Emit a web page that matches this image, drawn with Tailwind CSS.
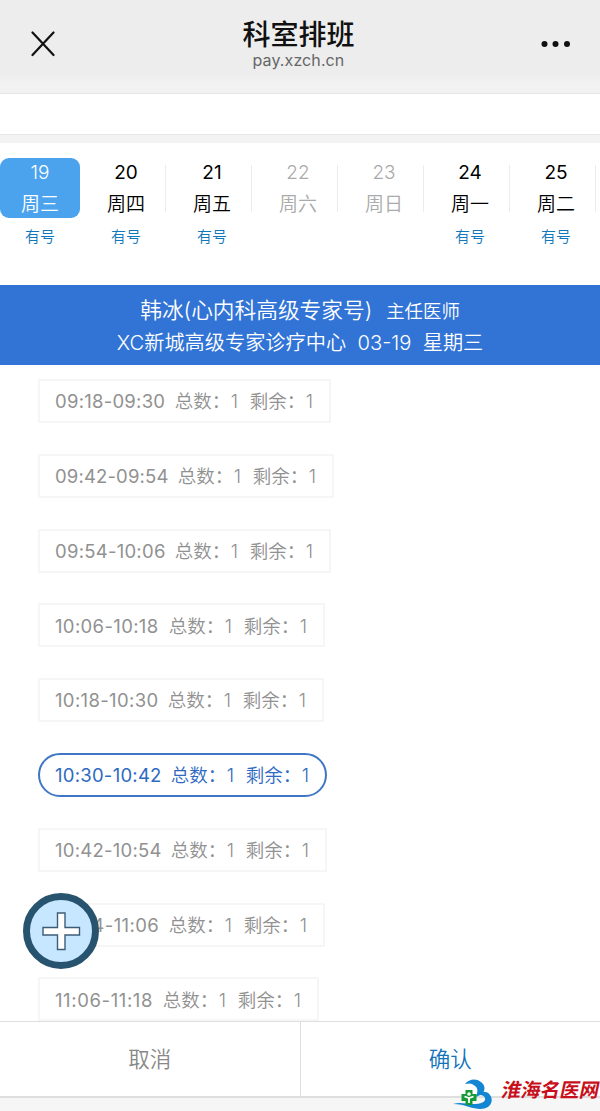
<!DOCTYPE html>
<html lang="zh-CN">

<head>
  <meta charset="UTF-8">
  <meta name="viewport" content="width=device-width, initial-scale=1.0">
  <title>科室排班</title>
  <script src="https://cdn.jsdelivr.net/npm/@tailwindcss/browser@4"></script>
  <style>
    body {
      font-family: 'Inter', 'Noto Sans CJK SC', sans-serif;
    }
  </style>
</head>

<body class="relative flex flex-col h-[1111px] w-[600px] overflow-hidden bg-white">
  <!-- 顶部导航栏 -->
  <header class="h-[94px] shrink-0 bg-gradient-to-b from-[#ededed] from-80% to-[#f2f2f2] to-90% border-b border-[#e6e6e6] flex items-start justify-between">
    <svg class="w-6 h-[26px] mt-[31px] ml-[31px]" viewBox="0 0 24 26" fill="none" stroke="#111" stroke-width="2.2" stroke-linecap="round">
      <path d="M1.5 1.5 L22.5 24 M22.5 1.5 L1.5 24" />
    </svg>
    <div class="text-center mt-[20px] ml-[1px]">
      <h1 class="text-[28px] leading-[30px] font-medium text-[#111]">科室排班</h1>
      <p class="text-[16px] leading-[20px] text-[#666] tracking-[0.1px]">pay.xzch.cn</p>
    </div>
    <svg class="w-[30px] h-[8px] mt-[40px] mr-[29px]" viewBox="0 0 30 8" fill="#111">
      <circle cx="3.5" cy="4" r="3" />
      <circle cx="14.5" cy="4" r="3" />
      <circle cx="26" cy="4" r="3" />
    </svg>
  </header>
  <div class="h-[40px] shrink-0 bg-white"></div>
  <div class="h-[9px] shrink-0 bg-[#f3f3f3] border-t border-[#e8e8e8]"></div>

  <!-- 日期选择 -->
  <nav class="flex h-[142px] shrink-0 pt-[15px] w-[610px] text-[19px] leading-[31px] text-center text-black font-[350]">
    <div class="w-20 mr-[3px] shrink-0">
      <div class="h-[60px] rounded-[9px] bg-[#4ba3ee] text-white">
        <div class="leading-[30px]">19</div>
        <div class="leading-[33px]">周三</div>
      </div>
      <div class="text-[15px] leading-[38px] text-[#1177bb]">有号</div>
    </div>
    <div class="w-[86px] shrink-0">
      <div class="h-[60px] bg-[linear-gradient(#ececec,#ececec)] bg-[length:1px_47px] bg-[position:82px_7px] bg-no-repeat">
        <div class="leading-[30px] font-normal">20</div>
        <div class="leading-[33px]">周四</div>
      </div>
      <div class="text-[15px] leading-[38px] text-[#1177bb]">有号</div>
    </div>
    <div class="w-[86px] shrink-0">
      <div class="h-[60px] bg-[linear-gradient(#ececec,#ececec)] bg-[length:1px_47px] bg-[position:82px_7px] bg-no-repeat">
        <div class="leading-[30px] font-normal">21</div>
        <div class="leading-[33px]">周五</div>
      </div>
      <div class="text-[15px] leading-[38px] text-[#1177bb]">有号</div>
    </div>
    <div class="w-[86px] shrink-0 text-[#aaa]">
      <div class="h-[60px] bg-[linear-gradient(#ececec,#ececec)] bg-[length:1px_47px] bg-[position:82px_7px] bg-no-repeat">
        <div class="leading-[30px]">22</div>
        <div class="leading-[33px]">周六</div>
      </div>
    </div>
    <div class="w-[86px] shrink-0 text-[#aaa]">
      <div class="h-[60px] bg-[linear-gradient(#ececec,#ececec)] bg-[length:1px_47px] bg-[position:82px_7px] bg-no-repeat">
        <div class="leading-[30px]">23</div>
        <div class="leading-[33px]">周日</div>
      </div>
    </div>
    <div class="w-[86px] shrink-0">
      <div class="h-[60px] bg-[linear-gradient(#ececec,#ececec)] bg-[length:1px_47px] bg-[position:82px_7px] bg-no-repeat">
        <div class="leading-[30px] font-normal">24</div>
        <div class="leading-[33px]">周一</div>
      </div>
      <div class="text-[15px] leading-[38px] text-[#1177bb]">有号</div>
    </div>
    <div class="w-[86px] shrink-0">
      <div class="h-[60px] bg-[linear-gradient(#ececec,#ececec)] bg-[length:1px_47px] bg-[position:82px_7px] bg-no-repeat">
        <div class="leading-[30px] font-normal">25</div>
        <div class="leading-[33px]">周二</div>
      </div>
      <div class="text-[15px] leading-[38px] text-[#1177bb]">有号</div>
    </div>
  </nav>

  <!-- 医生信息 -->
  <section class="h-[80px] shrink-0 bg-[#3174d6] text-white text-center pt-[10px] font-[350]">
    <div class="leading-[31px] text-[21.7px]">韩冰(心内科高级专家号)<span class="text-[18.4px] ml-[14px]">主任医师</span></div>
    <div class="leading-[31px] text-[20.2px]">XC新城高级专家诊疗中心&nbsp; 03-19&nbsp; 星期三</div>
  </section>

  <!-- 号源时段 -->
  <main class="h-[656px] shrink-0 overflow-hidden pt-[14px] pl-[38px] flex flex-col gap-[30.8px] text-[18.5px] text-[#919191] font-[350]">
    <div class="w-[293px] h-11 shrink-0 flex items-center justify-between pl-[15px] pr-4 pt-[2px] border-2 border-[#f6f6f6]">
      <span class="tracking-[0.25px] font-normal">09:18-09:30</span>
      <span class="flex"><span class="w-[56px]">总数：</span><span class="w-[19px]">1</span><span class="w-[56px]">剩余：</span><span>1</span></span>
    </div>
    <div class="w-[296px] h-11 shrink-0 flex items-center justify-between pl-[15px] pr-4 pt-[2px] border-2 border-[#f6f6f6]">
      <span class="tracking-[0.15px] font-normal">09:42-09:54</span>
      <span class="flex"><span class="w-[56px]">总数：</span><span class="w-[19px]">1</span><span class="w-[56px]">剩余：</span><span>1</span></span>
    </div>
    <div class="w-[293px] h-11 shrink-0 flex items-center justify-between pl-[15px] pr-4 pt-[2px] border-2 border-[#f6f6f6]">
      <span class="tracking-[0.25px] font-normal">09:54-10:06</span>
      <span class="flex"><span class="w-[56px]">总数：</span><span class="w-[19px]">1</span><span class="w-[56px]">剩余：</span><span>1</span></span>
    </div>
    <div class="w-[287px] h-11 shrink-0 flex items-center justify-between pl-[15px] pr-4 pt-[2px] border-2 border-[#f6f6f6]">
      <span class="tracking-[0.35px] font-normal">10:06-10:18</span>
      <span class="flex"><span class="w-[56px]">总数：</span><span class="w-[19px]">1</span><span class="w-[56px]">剩余：</span><span>1</span></span>
    </div>
    <div class="w-[286px] h-11 shrink-0 flex items-center justify-between pl-[15px] pr-4 pt-[2px] border-2 border-[#f6f6f6]">
      <span class="tracking-[0.35px] font-normal">10:18-10:30</span>
      <span class="flex"><span class="w-[56px]">总数：</span><span class="w-[19px]">1</span><span class="w-[56px]">剩余：</span><span>1</span></span>
    </div>
    <!-- 当前选中的时段 -->
    <div class="w-[289px] h-11 shrink-0 flex items-center justify-between pl-[15px] pr-4 pt-[2px] border-2 border-[#3f77c4] rounded-full text-[#2e6abf]">
      <span class="tracking-[0.25px] font-normal">10:30-10:42</span>
      <span class="flex"><span class="w-[56px]">总数：</span><span class="w-[19px]">1</span><span class="w-[56px]">剩余：</span><span>1</span></span>
    </div>
    <div class="w-[289px] h-11 shrink-0 flex items-center justify-between pl-[15px] pr-4 pt-[2px] border-2 border-[#f6f6f6]">
      <span class="tracking-[0.25px] font-normal">10:42-10:54</span>
      <span class="flex"><span class="w-[56px]">总数：</span><span class="w-[19px]">1</span><span class="w-[56px]">剩余：</span><span>1</span></span>
    </div>
    <div class="w-[287px] h-11 shrink-0 flex items-center justify-between pl-[15px] pr-4 pt-[2px] border-2 border-[#f6f6f6]">
      <span class="tracking-[0.4px] font-normal">10:54-11:06</span>
      <span class="flex"><span class="w-[56px]">总数：</span><span class="w-[19px]">1</span><span class="w-[56px]">剩余：</span><span>1</span></span>
    </div>
    <div class="w-[281px] h-11 shrink-0 flex items-center justify-between pl-[15px] pr-4 pt-[2px] border-2 border-[#f6f6f6]">
      <span class="tracking-[0.6px] font-normal">11:06-11:18</span>
      <span class="flex"><span class="w-[56px]">总数：</span><span class="w-[19px]">1</span><span class="w-[56px]">剩余：</span><span>1</span></span>
    </div>
  </main>

  <!-- 底部按钮 -->
  <footer class="h-[77px] shrink-0 flex border-t border-b-2 border-[#dedede] text-[21.5px] bg-white font-[350]">
    <button class="flex-1 border-r border-[#dedede] text-[#888]">取消</button>
    <button class="flex-1 text-[#1173bb]">确认</button>
  </footer>
  <div class="flex-1 bg-[#f6f6f6]"></div>

  <!-- 悬浮加号 -->
  <button class="absolute left-[23px] top-[893px] w-[76px] h-[76px]">
    <svg viewBox="0 0 76 76">
      <circle cx="38" cy="38" r="34.5" fill="#c6e7ff" stroke="#28536f" stroke-width="7" />
      <path d="M34.500 20h7.500v14.500h14.500v7.500h-14.500v14.500h-7.500v-14.500h-14.500v-7.500h14.500z" fill="#fff" stroke="#3e5c78" stroke-width="1.400" />
    </svg>
  </button>

  <!-- 网站水印 -->
  <div class="absolute left-[452px] top-[1077px] flex items-start">
    <svg class="w-[44px] h-[34px]" viewBox="0 0 44 34">
      <!-- 上弧 -->
      <path d="M13 7C17 2 24 1 29 5c4 3 5 8 1 12l-6 3c2-5 2-9-1-11-3-3-6-3-10-2z" fill="#1286d3" />
      <!-- 下弧和波浪 -->
      <path d="M23 19c4-5 12-6 15-1 3 4 2 9-2 12-5 3-12 2-19 0-5-2-10-3-16-3 7-2 13 0 20 0 8 0 13-2 12-6-1-3-5-4-10-2z" fill="#1286d3" />
      <path d="M13.500 13h7v4h4v7h-4v4h-7v-4h-4v-7h4z" fill="#159a35" />
      <circle cx="17" cy="17" r="1.800" fill="#fff" />
      <path d="M12.500 19.500l4.500 1.500 4.500-1.500M17 21v5" fill="none" stroke="#fff" stroke-width="1.800" />
    </svg>
    <span class="ml-[6px] mt-[-2px] text-[19.5px] leading-[30px] font-bold text-[#c8101c] -skew-x-12 whitespace-nowrap">淮海名医网</span>
  </div>
</body>

</html>
